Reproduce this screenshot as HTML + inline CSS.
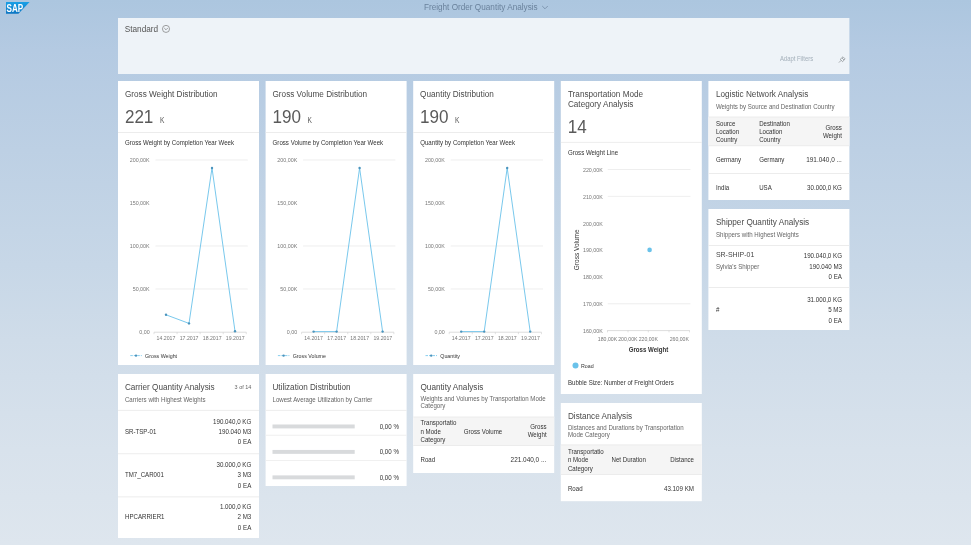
<!DOCTYPE html>
<html><head><meta charset="utf-8"><title>Freight Order Quantity Analysis</title>
<style>
html,body{margin:0;padding:0;}
body{width:971px;height:545px;overflow:hidden;position:relative;
background:linear-gradient(180deg,#acc6df 0px,#b4cae2 50px,#bdd0e4 150px,#c7d7e7 265px,#cfdce9 340px,#d8e2ec 450px,#dee6ee 545px);}
svg{position:absolute;left:0;top:0;font-family:"Liberation Sans", sans-serif;filter:blur(0.3px);}
</style></head><body>
<svg width="971" height="545" viewBox="0 0 971 545">
<text transform="translate(423.90,10.30) scale(1.0,1.06)" font-size="8.2" fill="#6a829c" text-anchor="start">Freight Order Quantity Analysis</text>
<polyline points="542.2,6.0 545,8.8 547.8,6.0" fill="none" stroke="#6a829c" stroke-width="0.7"/>
<defs><linearGradient id="sapg" x1="0" y1="0" x2="0" y2="1"><stop offset="0" stop-color="#1aa0e6"/><stop offset="1" stop-color="#0b75c2"/></linearGradient></defs>
<polygon points="6,2 29.6,2 18.4,13.8 6,13.8" fill="url(#sapg)"/>
<text x="6.6" y="12.1" font-family='"Liberation Sans", sans-serif' font-weight="bold" font-size="10.2" fill="#fff" textLength="16.6" lengthAdjust="spacingAndGlyphs">SAP</text>
<rect x="118.00" y="18.00" width="731.40" height="56.00" fill="#eef3f8"/>
<text transform="translate(124.70,32.00) scale(1.0,1.06)" font-size="8.25" fill="#555" text-anchor="start">Standard</text>
<circle cx="166" cy="28.9" r="3.55" fill="none" stroke="#7a7a7a" stroke-width="0.7"/>
<polyline points="164.2,28.0 166,29.8 167.8,28.0" fill="none" stroke="#7a7a7a" stroke-width="0.7"/>
<text transform="translate(779.90,60.80) scale(1.0,1.15)" font-size="5.93" fill="#a3afba" text-anchor="start">Adapt Filters</text>
<g stroke="#8c9196" stroke-width="0.75" fill="none"><line x1="838.9" y1="62.6" x2="841.2" y2="60.3"/><polygon points="840.2,59.3 843,56.8 845.1,58.9 842.6,61.7"/><line x1="842" y1="58" x2="844" y2="60"/></g>
<rect x="118.00" y="81.00" width="141.00" height="284.00" fill="#fff"/>
<text transform="translate(124.90,97.10) scale(1.0,1.06)" font-size="8.2" fill="#4a4a4a" text-anchor="start">Gross Weight Distribution</text>
<text transform="translate(124.90,123.00) scale(1.035,1.09)" font-size="16.5" fill="#5a5a5a" text-anchor="start">221</text>
<text transform="translate(159.90,123.00) scale(1.0,1.25)" font-size="6.6" fill="#5a5a5a" text-anchor="start">K</text>
<rect x="118.00" y="132.20" width="141.00" height="0.80" fill="#e8e8e8"/>
<text transform="translate(125.00,145.40) scale(1.0,1.1)" font-size="6.13" fill="#333" text-anchor="start">Gross Weight by Completion Year Week</text>
<line x1="155.5" y1="160" x2="247.8" y2="160" stroke="#e6e6e6" stroke-width="0.7"/>
<text transform="translate(149.60,162.30) scale(1.0,1.1)" font-size="5.35" fill="#777" text-anchor="end">200,00K</text>
<text transform="translate(149.60,205.30) scale(1.0,1.1)" font-size="5.35" fill="#777" text-anchor="end">150,00K</text>
<line x1="155.5" y1="246" x2="247.8" y2="246" stroke="#e6e6e6" stroke-width="0.7"/>
<text transform="translate(149.60,248.30) scale(1.0,1.1)" font-size="5.35" fill="#777" text-anchor="end">100,00K</text>
<line x1="155.5" y1="289" x2="247.8" y2="289" stroke="#e6e6e6" stroke-width="0.7"/>
<text transform="translate(149.60,291.30) scale(1.0,1.1)" font-size="5.35" fill="#777" text-anchor="end">50,00K</text>
<text transform="translate(149.60,334.30) scale(1.0,1.1)" font-size="5.35" fill="#777" text-anchor="end">0,00</text>
<line x1="154.0" y1="332.2" x2="246.3" y2="332.2" stroke="#cfcfcf" stroke-width="0.7"/>
<line x1="154.00" y1="332.2" x2="154.00" y2="334.2" stroke="#cfcfcf" stroke-width="0.6"/>
<line x1="177.07" y1="332.2" x2="177.07" y2="334.2" stroke="#cfcfcf" stroke-width="0.6"/>
<line x1="200.14" y1="332.2" x2="200.14" y2="334.2" stroke="#cfcfcf" stroke-width="0.6"/>
<line x1="223.21" y1="332.2" x2="223.21" y2="334.2" stroke="#cfcfcf" stroke-width="0.6"/>
<line x1="246.28" y1="332.2" x2="246.28" y2="334.2" stroke="#cfcfcf" stroke-width="0.6"/>
<text transform="translate(166.00,340.00) scale(1.0,1.1)" font-size="5.2" fill="#777" text-anchor="middle">14.2017</text>
<text transform="translate(189.07,340.00) scale(1.0,1.1)" font-size="5.2" fill="#777" text-anchor="middle">17.2017</text>
<text transform="translate(212.14,340.00) scale(1.0,1.1)" font-size="5.2" fill="#777" text-anchor="middle">18.2017</text>
<text transform="translate(235.21,340.00) scale(1.0,1.1)" font-size="5.2" fill="#777" text-anchor="middle">19.2017</text>
<polyline points="166.00,314.80 189.00,323.40 212.00,168.00 235.00,331.20" fill="none" stroke="#6ac2ea" stroke-width="0.9" stroke-linejoin="round"/>
<circle cx="166.00" cy="314.80" r="1.2" fill="#4b94bd"/>
<circle cx="189.00" cy="323.40" r="1.2" fill="#4b94bd"/>
<circle cx="212.00" cy="168.00" r="1.2" fill="#4b94bd"/>
<circle cx="235.00" cy="331.20" r="1.2" fill="#4b94bd"/>
<line x1="130.3" y1="355.6" x2="141.8" y2="355.6" stroke="#6ac2ea" stroke-width="0.8" stroke-dasharray="2.5,1"/>
<circle cx="136.0" cy="355.6" r="1.2" fill="#4b94bd"/>
<text transform="translate(145.10,357.50) scale(1.0,1.1)" font-size="5.3" fill="#333" text-anchor="start">Gross Weight</text>
<rect x="265.60" y="81.00" width="141.00" height="284.00" fill="#fff"/>
<text transform="translate(272.50,97.10) scale(1.0,1.06)" font-size="8.2" fill="#4a4a4a" text-anchor="start">Gross Volume Distribution</text>
<text transform="translate(272.50,123.00) scale(1.035,1.09)" font-size="16.5" fill="#5a5a5a" text-anchor="start">190</text>
<text transform="translate(307.50,123.00) scale(1.0,1.25)" font-size="6.6" fill="#5a5a5a" text-anchor="start">K</text>
<rect x="265.60" y="132.20" width="141.00" height="0.80" fill="#e8e8e8"/>
<text transform="translate(272.60,145.40) scale(1.0,1.1)" font-size="6.13" fill="#333" text-anchor="start">Gross Volume by Completion Year Week</text>
<line x1="303.1" y1="160" x2="395.40000000000003" y2="160" stroke="#e6e6e6" stroke-width="0.7"/>
<text transform="translate(297.20,162.30) scale(1.0,1.1)" font-size="5.35" fill="#777" text-anchor="end">200,00K</text>
<text transform="translate(297.20,205.30) scale(1.0,1.1)" font-size="5.35" fill="#777" text-anchor="end">150,00K</text>
<line x1="303.1" y1="246" x2="395.40000000000003" y2="246" stroke="#e6e6e6" stroke-width="0.7"/>
<text transform="translate(297.20,248.30) scale(1.0,1.1)" font-size="5.35" fill="#777" text-anchor="end">100,00K</text>
<line x1="303.1" y1="289" x2="395.40000000000003" y2="289" stroke="#e6e6e6" stroke-width="0.7"/>
<text transform="translate(297.20,291.30) scale(1.0,1.1)" font-size="5.35" fill="#777" text-anchor="end">50,00K</text>
<text transform="translate(297.20,334.30) scale(1.0,1.1)" font-size="5.35" fill="#777" text-anchor="end">0,00</text>
<line x1="301.6" y1="332.2" x2="393.90000000000003" y2="332.2" stroke="#cfcfcf" stroke-width="0.7"/>
<line x1="301.60" y1="332.2" x2="301.60" y2="334.2" stroke="#cfcfcf" stroke-width="0.6"/>
<line x1="324.67" y1="332.2" x2="324.67" y2="334.2" stroke="#cfcfcf" stroke-width="0.6"/>
<line x1="347.74" y1="332.2" x2="347.74" y2="334.2" stroke="#cfcfcf" stroke-width="0.6"/>
<line x1="370.81" y1="332.2" x2="370.81" y2="334.2" stroke="#cfcfcf" stroke-width="0.6"/>
<line x1="393.88" y1="332.2" x2="393.88" y2="334.2" stroke="#cfcfcf" stroke-width="0.6"/>
<text transform="translate(313.60,340.00) scale(1.0,1.1)" font-size="5.2" fill="#777" text-anchor="middle">14.2017</text>
<text transform="translate(336.67,340.00) scale(1.0,1.1)" font-size="5.2" fill="#777" text-anchor="middle">17.2017</text>
<text transform="translate(359.74,340.00) scale(1.0,1.1)" font-size="5.2" fill="#777" text-anchor="middle">18.2017</text>
<text transform="translate(382.81,340.00) scale(1.0,1.1)" font-size="5.2" fill="#777" text-anchor="middle">19.2017</text>
<polyline points="313.60,331.60 336.60,331.60 359.60,168.00 382.60,331.60" fill="none" stroke="#6ac2ea" stroke-width="0.9" stroke-linejoin="round"/>
<circle cx="313.60" cy="331.60" r="1.2" fill="#4b94bd"/>
<circle cx="336.60" cy="331.60" r="1.2" fill="#4b94bd"/>
<circle cx="359.60" cy="168.00" r="1.2" fill="#4b94bd"/>
<circle cx="382.60" cy="331.60" r="1.2" fill="#4b94bd"/>
<line x1="277.90000000000003" y1="355.6" x2="289.40000000000003" y2="355.6" stroke="#6ac2ea" stroke-width="0.8" stroke-dasharray="2.5,1"/>
<circle cx="283.6" cy="355.6" r="1.2" fill="#4b94bd"/>
<text transform="translate(292.70,357.50) scale(1.0,1.1)" font-size="5.3" fill="#333" text-anchor="start">Gross Volume</text>
<rect x="413.20" y="81.00" width="141.00" height="284.00" fill="#fff"/>
<text transform="translate(420.10,97.10) scale(1.0,1.06)" font-size="8.2" fill="#4a4a4a" text-anchor="start">Quantity Distribution</text>
<text transform="translate(420.10,123.00) scale(1.035,1.09)" font-size="16.5" fill="#5a5a5a" text-anchor="start">190</text>
<text transform="translate(455.10,123.00) scale(1.0,1.25)" font-size="6.6" fill="#5a5a5a" text-anchor="start">K</text>
<rect x="413.20" y="132.20" width="141.00" height="0.80" fill="#e8e8e8"/>
<text transform="translate(420.20,145.40) scale(1.0,1.1)" font-size="6.13" fill="#333" text-anchor="start">Quantity by Completion Year Week</text>
<line x1="450.7" y1="160" x2="543.0" y2="160" stroke="#e6e6e6" stroke-width="0.7"/>
<text transform="translate(444.80,162.30) scale(1.0,1.1)" font-size="5.35" fill="#777" text-anchor="end">200,00K</text>
<text transform="translate(444.80,205.30) scale(1.0,1.1)" font-size="5.35" fill="#777" text-anchor="end">150,00K</text>
<line x1="450.7" y1="246" x2="543.0" y2="246" stroke="#e6e6e6" stroke-width="0.7"/>
<text transform="translate(444.80,248.30) scale(1.0,1.1)" font-size="5.35" fill="#777" text-anchor="end">100,00K</text>
<line x1="450.7" y1="289" x2="543.0" y2="289" stroke="#e6e6e6" stroke-width="0.7"/>
<text transform="translate(444.80,291.30) scale(1.0,1.1)" font-size="5.35" fill="#777" text-anchor="end">50,00K</text>
<text transform="translate(444.80,334.30) scale(1.0,1.1)" font-size="5.35" fill="#777" text-anchor="end">0,00</text>
<line x1="449.2" y1="332.2" x2="541.5" y2="332.2" stroke="#cfcfcf" stroke-width="0.7"/>
<line x1="449.20" y1="332.2" x2="449.20" y2="334.2" stroke="#cfcfcf" stroke-width="0.6"/>
<line x1="472.27" y1="332.2" x2="472.27" y2="334.2" stroke="#cfcfcf" stroke-width="0.6"/>
<line x1="495.34" y1="332.2" x2="495.34" y2="334.2" stroke="#cfcfcf" stroke-width="0.6"/>
<line x1="518.41" y1="332.2" x2="518.41" y2="334.2" stroke="#cfcfcf" stroke-width="0.6"/>
<line x1="541.48" y1="332.2" x2="541.48" y2="334.2" stroke="#cfcfcf" stroke-width="0.6"/>
<text transform="translate(461.20,340.00) scale(1.0,1.1)" font-size="5.2" fill="#777" text-anchor="middle">14.2017</text>
<text transform="translate(484.27,340.00) scale(1.0,1.1)" font-size="5.2" fill="#777" text-anchor="middle">17.2017</text>
<text transform="translate(507.34,340.00) scale(1.0,1.1)" font-size="5.2" fill="#777" text-anchor="middle">18.2017</text>
<text transform="translate(530.41,340.00) scale(1.0,1.1)" font-size="5.2" fill="#777" text-anchor="middle">19.2017</text>
<polyline points="461.20,331.60 484.20,331.60 507.20,168.00 530.20,331.60" fill="none" stroke="#6ac2ea" stroke-width="0.9" stroke-linejoin="round"/>
<circle cx="461.20" cy="331.60" r="1.2" fill="#4b94bd"/>
<circle cx="484.20" cy="331.60" r="1.2" fill="#4b94bd"/>
<circle cx="507.20" cy="168.00" r="1.2" fill="#4b94bd"/>
<circle cx="530.20" cy="331.60" r="1.2" fill="#4b94bd"/>
<line x1="425.5" y1="355.6" x2="437.0" y2="355.6" stroke="#6ac2ea" stroke-width="0.8" stroke-dasharray="2.5,1"/>
<circle cx="431.2" cy="355.6" r="1.2" fill="#4b94bd"/>
<text transform="translate(440.30,357.50) scale(1.0,1.1)" font-size="5.3" fill="#333" text-anchor="start">Quantity</text>
<rect x="560.80" y="81.00" width="141.00" height="313.00" fill="#fff"/>
<text transform="translate(567.90,97.10) scale(1.0,1.06)" font-size="8.2" fill="#4a4a4a" text-anchor="start">Transportation Mode</text>
<text transform="translate(567.90,107.20) scale(1.0,1.06)" font-size="8.2" fill="#4a4a4a" text-anchor="start">Category Analysis</text>
<text transform="translate(567.80,132.60) scale(1.035,1.09)" font-size="16.5" fill="#5a5a5a" text-anchor="start">14</text>
<rect x="560.80" y="141.90" width="141.00" height="0.80" fill="#e8e8e8"/>
<text transform="translate(567.90,155.00) scale(1.0,1.1)" font-size="6.13" fill="#333" text-anchor="start">Gross Weight Line</text>
<text transform="translate(602.80,171.80) scale(1.0,1.1)" font-size="5.35" fill="#777" text-anchor="end">220,00K</text>
<line x1="607.8" y1="169.50" x2="690.4" y2="169.50" stroke="#e6e6e6" stroke-width="0.7"/>
<text transform="translate(602.80,198.65) scale(1.0,1.1)" font-size="5.35" fill="#777" text-anchor="end">210,00K</text>
<line x1="607.8" y1="196.35" x2="690.4" y2="196.35" stroke="#e6e6e6" stroke-width="0.7"/>
<text transform="translate(602.80,225.50) scale(1.0,1.1)" font-size="5.35" fill="#777" text-anchor="end">200,00K</text>
<text transform="translate(602.80,252.35) scale(1.0,1.1)" font-size="5.35" fill="#777" text-anchor="end">190,00K</text>
<text transform="translate(602.80,279.20) scale(1.0,1.1)" font-size="5.35" fill="#777" text-anchor="end">180,00K</text>
<text transform="translate(602.80,306.05) scale(1.0,1.1)" font-size="5.35" fill="#777" text-anchor="end">170,00K</text>
<line x1="607.8" y1="303.75" x2="690.4" y2="303.75" stroke="#e6e6e6" stroke-width="0.7"/>
<text transform="translate(602.80,332.90) scale(1.0,1.1)" font-size="5.35" fill="#777" text-anchor="end">160,00K</text>
<line x1="607.2" y1="330.6" x2="689.8" y2="330.6" stroke="#cfcfcf" stroke-width="0.7"/>
<line x1="607.5" y1="330.6" x2="607.5" y2="332.4" stroke="#cfcfcf" stroke-width="0.6"/>
<line x1="628" y1="330.6" x2="628" y2="332.4" stroke="#cfcfcf" stroke-width="0.6"/>
<line x1="648.3" y1="330.6" x2="648.3" y2="332.4" stroke="#cfcfcf" stroke-width="0.6"/>
<line x1="669" y1="330.6" x2="669" y2="332.4" stroke="#cfcfcf" stroke-width="0.6"/>
<line x1="689.5" y1="330.6" x2="689.5" y2="332.4" stroke="#cfcfcf" stroke-width="0.6"/>
<text transform="translate(607.50,341.30) scale(1.0,1.1)" font-size="5.2" fill="#777" text-anchor="middle">180,00K</text>
<text transform="translate(627.90,341.30) scale(1.0,1.1)" font-size="5.2" fill="#777" text-anchor="middle">200,00K</text>
<text transform="translate(648.30,341.30) scale(1.0,1.1)" font-size="5.2" fill="#777" text-anchor="middle">220,00K</text>
<text transform="translate(679.30,341.30) scale(1.0,1.1)" font-size="5.2" fill="#777" text-anchor="middle">260,00K</text>
<text transform="translate(648.50,351.80) scale(1.0,1.1)" font-size="6.11" fill="#333" text-anchor="middle" font-weight="bold">Gross Weight</text>
<text transform="translate(579.3,249.8) rotate(-90)" text-anchor="middle" font-family='"Liberation Sans", sans-serif' font-size="6.5" fill="#333">Gross Volume</text>
<circle cx="649.6" cy="249.9" r="2.3" fill="#6ac2ea"/>
<circle cx="575.5" cy="365.6" r="3" fill="#6ac2ea"/>
<text transform="translate(581.00,367.50) scale(1.0,1.1)" font-size="5.3" fill="#333" text-anchor="start">Road</text>
<text transform="translate(567.90,384.80) scale(1.0,1.1)" font-size="6.13" fill="#333" text-anchor="start">Bubble Size: Number of Freight Orders</text>
<rect x="708.40" y="81.00" width="141.00" height="119.00" fill="#fff"/>
<text transform="translate(715.90,97.10) scale(1.0,1.06)" font-size="8.2" fill="#4a4a4a" text-anchor="start">Logistic Network Analysis</text>
<text transform="translate(715.90,109.00) scale(1.0,1.1)" font-size="6.13" fill="#666" text-anchor="start">Weights by Source and Destination Country</text>
<rect x="708.40" y="117.00" width="141.00" height="28.80" fill="#f5f5f5"/>
<rect x="708.40" y="116.60" width="141.00" height="0.80" fill="#e8e8e8"/>
<rect x="708.40" y="145.40" width="141.00" height="0.80" fill="#e8e8e8"/>
<text transform="translate(715.90,125.70) scale(1.0,1.1)" font-size="6.13" fill="#333" text-anchor="start">Source</text>
<text transform="translate(715.90,133.90) scale(1.0,1.1)" font-size="6.13" fill="#333" text-anchor="start">Location</text>
<text transform="translate(715.90,141.80) scale(1.0,1.1)" font-size="6.13" fill="#333" text-anchor="start">Country</text>
<text transform="translate(759.20,125.70) scale(1.0,1.1)" font-size="6.13" fill="#333" text-anchor="start">Destination</text>
<text transform="translate(759.20,133.90) scale(1.0,1.1)" font-size="6.13" fill="#333" text-anchor="start">Location</text>
<text transform="translate(759.20,141.80) scale(1.0,1.1)" font-size="6.13" fill="#333" text-anchor="start">Country</text>
<text transform="translate(841.90,129.90) scale(1.0,1.1)" font-size="6.13" fill="#333" text-anchor="end">Gross</text>
<text transform="translate(841.90,137.90) scale(1.0,1.1)" font-size="6.13" fill="#333" text-anchor="end">Weight</text>
<text transform="translate(715.90,161.90) scale(1.0,1.1)" font-size="6.13" fill="#333" text-anchor="start">Germany</text>
<text transform="translate(759.20,161.90) scale(1.0,1.1)" font-size="6.13" fill="#333" text-anchor="start">Germany</text>
<text transform="translate(841.90,161.90) scale(1.05,1.1)" font-size="6.13" fill="#333" text-anchor="end">191.040,0 ...</text>
<rect x="708.40" y="173.20" width="141.00" height="0.80" fill="#e8e8e8"/>
<text transform="translate(715.90,189.50) scale(1.0,1.1)" font-size="6.13" fill="#333" text-anchor="start">India</text>
<text transform="translate(759.20,189.50) scale(1.0,1.1)" font-size="6.13" fill="#333" text-anchor="start">USA</text>
<text transform="translate(841.90,189.50) scale(1.015,1.1)" font-size="6.13" fill="#333" text-anchor="end">30.000,0 KG</text>
<rect x="708.40" y="209.00" width="141.00" height="121.00" fill="#fff"/>
<text transform="translate(715.90,224.90) scale(1.0,1.06)" font-size="8.2" fill="#4a4a4a" text-anchor="start">Shipper Quantity Analysis</text>
<text transform="translate(715.90,236.70) scale(1.0,1.1)" font-size="6.13" fill="#666" text-anchor="start">Shippers with Highest Weights</text>
<rect x="708.40" y="245.20" width="141.00" height="0.80" fill="#e8e8e8"/>
<text transform="translate(715.90,257.20) scale(1.0,1.1)" font-size="7.0" fill="#444" text-anchor="start">SR-SHIP-01</text>
<text transform="translate(842.00,258.30) scale(1.015,1.1)" font-size="6.13" fill="#333" text-anchor="end">190.040,0 KG</text>
<text transform="translate(715.90,268.90) scale(1.0,1.1)" font-size="6.13" fill="#666" text-anchor="start">Sylvia's Shipper</text>
<text transform="translate(842.00,268.90) scale(1.015,1.1)" font-size="6.13" fill="#333" text-anchor="end">190.040 M3</text>
<text transform="translate(842.00,279.40) scale(1.015,1.1)" font-size="6.13" fill="#333" text-anchor="end">0 EA</text>
<rect x="708.40" y="287.10" width="141.00" height="0.80" fill="#e8e8e8"/>
<text transform="translate(842.00,301.80) scale(1.015,1.1)" font-size="6.13" fill="#333" text-anchor="end">31.000,0 KG</text>
<text transform="translate(716.00,312.10) scale(1.0,1.1)" font-size="6.13" fill="#333" text-anchor="start">#</text>
<text transform="translate(842.00,312.10) scale(1.015,1.1)" font-size="6.13" fill="#333" text-anchor="end">5 M3</text>
<text transform="translate(842.00,322.70) scale(1.015,1.1)" font-size="6.13" fill="#333" text-anchor="end">0 EA</text>
<rect x="118.00" y="374.00" width="141.00" height="164.00" fill="#fff"/>
<text transform="translate(124.90,389.90) scale(1.0,1.06)" font-size="8.18" fill="#4a4a4a" text-anchor="start">Carrier Quantity Analysis</text>
<text transform="translate(251.40,389.20) scale(1.0,1.1)" font-size="5.5" fill="#666" text-anchor="end">3 of 14</text>
<text transform="translate(124.90,401.80) scale(1.0,1.1)" font-size="6.13" fill="#666" text-anchor="start">Carriers with Highest Weights</text>
<rect x="118.00" y="409.90" width="141.00" height="0.80" fill="#e8e8e8"/>
<text transform="translate(251.30,423.50) scale(1.015,1.1)" font-size="6.13" fill="#333" text-anchor="end">190.040,0 KG</text>
<text transform="translate(125.00,434.00) scale(1.0,1.1)" font-size="6.13" fill="#333" text-anchor="start">SR-TSP-01</text>
<text transform="translate(251.30,434.00) scale(1.015,1.1)" font-size="6.13" fill="#333" text-anchor="end">190.040 M3</text>
<text transform="translate(251.30,444.40) scale(1.015,1.1)" font-size="6.13" fill="#333" text-anchor="end">0 EA</text>
<rect x="118.00" y="453.40" width="141.00" height="0.80" fill="#e8e8e8"/>
<text transform="translate(251.30,466.60) scale(1.015,1.1)" font-size="6.13" fill="#333" text-anchor="end">30.000,0 KG</text>
<text transform="translate(125.00,477.10) scale(1.0,1.1)" font-size="6.13" fill="#333" text-anchor="start">TM7_CAR001</text>
<text transform="translate(251.30,477.10) scale(1.015,1.1)" font-size="6.13" fill="#333" text-anchor="end">3 M3</text>
<text transform="translate(251.30,487.50) scale(1.015,1.1)" font-size="6.13" fill="#333" text-anchor="end">0 EA</text>
<rect x="118.00" y="496.50" width="141.00" height="0.80" fill="#e8e8e8"/>
<text transform="translate(251.30,508.90) scale(1.015,1.1)" font-size="6.13" fill="#333" text-anchor="end">1.000,0 KG</text>
<text transform="translate(125.00,519.40) scale(1.0,1.1)" font-size="6.13" fill="#333" text-anchor="start">HPCARRIER1</text>
<text transform="translate(251.30,519.40) scale(1.015,1.1)" font-size="6.13" fill="#333" text-anchor="end">2 M3</text>
<text transform="translate(251.30,529.80) scale(1.015,1.1)" font-size="6.13" fill="#333" text-anchor="end">0 EA</text>
<rect x="265.60" y="374.00" width="141.00" height="112.00" fill="#fff"/>
<text transform="translate(272.50,389.90) scale(1.0,1.06)" font-size="8.15" fill="#4a4a4a" text-anchor="start">Utilization Distribution</text>
<text transform="translate(272.50,401.80) scale(1.0,1.1)" font-size="6.11" fill="#666" text-anchor="start">Lowest Average Utilization by Carrier</text>
<rect x="265.60" y="409.90" width="141.00" height="0.80" fill="#e8e8e8"/>
<rect x="272.50" y="424.50" width="82.20" height="3.90" fill="#d8dadc"/>
<text transform="translate(398.90,428.90) scale(1.015,1.1)" font-size="6.1" fill="#333" text-anchor="end">0,00 %</text>
<rect x="265.60" y="434.80" width="141.00" height="0.80" fill="#ececec"/>
<rect x="272.50" y="449.95" width="82.20" height="3.90" fill="#d8dadc"/>
<text transform="translate(398.90,454.35) scale(1.015,1.1)" font-size="6.1" fill="#333" text-anchor="end">0,00 %</text>
<rect x="265.60" y="460.10" width="141.00" height="0.80" fill="#ececec"/>
<rect x="272.50" y="475.40" width="82.20" height="3.90" fill="#d8dadc"/>
<text transform="translate(398.90,479.80) scale(1.015,1.1)" font-size="6.1" fill="#333" text-anchor="end">0,00 %</text>
<rect x="413.20" y="374.00" width="141.00" height="99.00" fill="#fff"/>
<text transform="translate(420.50,389.90) scale(1.0,1.06)" font-size="8.2" fill="#4a4a4a" text-anchor="start">Quantity Analysis</text>
<text transform="translate(420.50,401.40) scale(1.0,1.1)" font-size="6.13" fill="#666" text-anchor="start">Weights and Volumes by Transportation Mode</text>
<text transform="translate(420.50,408.40) scale(1.0,1.1)" font-size="6.13" fill="#666" text-anchor="start">Category</text>
<rect x="413.20" y="417.00" width="141.00" height="28.30" fill="#f5f5f5"/>
<rect x="413.20" y="416.60" width="141.00" height="0.80" fill="#e8e8e8"/>
<rect x="413.20" y="445.00" width="141.00" height="0.80" fill="#e8e8e8"/>
<text transform="translate(420.50,425.40) scale(1.0,1.1)" font-size="6.13" fill="#333" text-anchor="start">Transportatio</text>
<text transform="translate(420.50,433.50) scale(1.0,1.1)" font-size="6.13" fill="#333" text-anchor="start">n Mode</text>
<text transform="translate(420.50,441.70) scale(1.0,1.1)" font-size="6.13" fill="#333" text-anchor="start">Category</text>
<text transform="translate(463.70,433.50) scale(1.0,1.1)" font-size="6.13" fill="#333" text-anchor="start">Gross Volume</text>
<text transform="translate(546.60,429.40) scale(1.0,1.1)" font-size="6.13" fill="#333" text-anchor="end">Gross</text>
<text transform="translate(546.60,437.30) scale(1.0,1.1)" font-size="6.13" fill="#333" text-anchor="end">Weight</text>
<text transform="translate(420.50,461.90) scale(1.0,1.1)" font-size="6.13" fill="#333" text-anchor="start">Road</text>
<text transform="translate(546.30,461.90) scale(1.05,1.1)" font-size="6.13" fill="#333" text-anchor="end">221.040,0 ...</text>
<rect x="560.80" y="403.00" width="141.00" height="98.20" fill="#fff"/>
<text transform="translate(567.90,418.50) scale(1.0,1.06)" font-size="8.2" fill="#4a4a4a" text-anchor="start">Distance Analysis</text>
<text transform="translate(567.90,430.00) scale(1.0,1.1)" font-size="6.13" fill="#666" text-anchor="start">Distances and Durations by Transportation</text>
<text transform="translate(567.90,436.90) scale(1.0,1.1)" font-size="6.13" fill="#666" text-anchor="start">Mode Category</text>
<rect x="560.80" y="444.90" width="141.00" height="29.40" fill="#f5f5f5"/>
<rect x="560.80" y="444.50" width="141.00" height="0.80" fill="#e8e8e8"/>
<rect x="560.80" y="474.00" width="141.00" height="0.80" fill="#e8e8e8"/>
<text transform="translate(567.90,454.00) scale(1.0,1.1)" font-size="6.13" fill="#333" text-anchor="start">Transportatio</text>
<text transform="translate(567.90,462.30) scale(1.0,1.1)" font-size="6.13" fill="#333" text-anchor="start">n Mode</text>
<text transform="translate(567.90,470.60) scale(1.0,1.1)" font-size="6.13" fill="#333" text-anchor="start">Category</text>
<text transform="translate(611.50,462.30) scale(1.0,1.1)" font-size="6.13" fill="#333" text-anchor="start">Net Duration</text>
<text transform="translate(694.00,462.30) scale(1.0,1.1)" font-size="6.13" fill="#333" text-anchor="end">Distance</text>
<text transform="translate(567.90,490.50) scale(1.0,1.1)" font-size="6.13" fill="#333" text-anchor="start">Road</text>
<text transform="translate(694.00,490.50) scale(1.015,1.1)" font-size="6.13" fill="#333" text-anchor="end">43.109 KM</text>
</svg>
</body></html>
